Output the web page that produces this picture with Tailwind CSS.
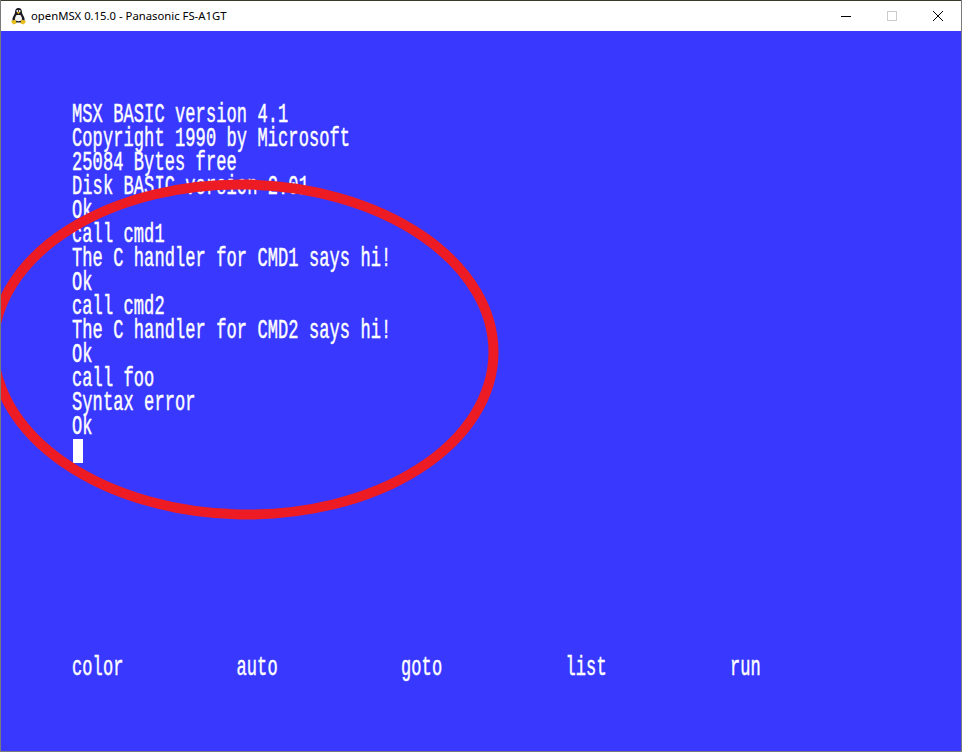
<!DOCTYPE html>
<html lang="en">
<head>
    <meta charset="UTF-8">
    <title>openMSX 0.15.0 - Panasonic FS-A1GT</title>
    <script src="https://cdn.jsdelivr.net/npm/@tailwindcss/browser@4"></script>
</head>
<body class="bg-[#3838ff]">
    <div class="relative w-[962px] h-[752px] overflow-hidden flex flex-col bg-[#3838ff] border-x border-b border-[#7a7a7a]">
        <!-- Title bar -->
        <header class="h-[31px] shrink-0 bg-white border-t border-[#3a3a2a] flex items-center font-['Noto_Sans',sans-serif] text-[11.3px] text-black">
            <svg class="ml-[9px] w-[17px] h-[18px]" viewBox="0 0 17 18">
                <path d="M8.500 1C6 1 5 3 5 5.500C5 7 3 9 2.500 11.500C2 13.500 3 15 4.500 15.500L12.500 15.500C14 15 15 13.500 14.500 11.500C14 9 12 7 12 5.500C12 3 11 1 8.500 1Z" fill="#1a1a22"/>
                <path d="M6.500 8C5.500 9.500 4.800 11 5 13C5.500 14.500 11.500 14.500 12 13C12.200 11 11.500 9.500 10.500 8Z" fill="#f4f4f4"/>
                <circle cx="7.300" cy="4" r="0.900" fill="#fff"/>
                <circle cx="9.700" cy="4" r="0.900" fill="#fff"/>
                <path d="M6.800 5.500L8.500 4.800L10.200 5.500L8.500 7Z" fill="#e8b020"/>
                <path d="M1 14L5.500 12.500L6.500 16.500L3 17.500Z" fill="#e8c020"/>
                <path d="M16 14L11.500 12.500L10.500 16.500L14 17.500Z" fill="#e8c020"/>
            </svg>
            <span class="ml-[4px]">openMSX 0.15.0 - Panasonic FS-A1GT</span>
            <div class="ml-auto flex items-center h-full">
                <div class="w-[46px] flex justify-center"><div class="w-[10px] h-px bg-black"></div></div>
                <div class="w-[46px] flex justify-center"><div class="w-[10px] h-[10px] border border-[#cccccc]"></div></div>
                <div class="w-[46px] flex justify-center">
                    <svg class="w-[10px] h-[10px]" viewBox="0 0 10 10"><path d="M0 0L10 10M10 0L0 10" stroke="#000" stroke-width="1" fill="none"/></svg>
                </div>
            </div>
        </header>

        <!-- MSX screen -->
        <main class="flex-1 flex flex-col pl-[71px] pt-[72px] pb-[71px] font-['Liberation_Mono',monospace] text-[17px] tracking-[0.1px] text-white leading-6 [-webkit-text-stroke:0.3px_white]">
            <div>
                <p class="h-6 whitespace-pre [transform:translateY(1px)_scaleY(1.6)]">MSX BASIC version 4.1</p>
                <p class="h-6 whitespace-pre [transform:translateY(1px)_scaleY(1.6)]">Copyright 1990 by Microsoft</p>
                <p class="h-6 whitespace-pre [transform:translateY(1px)_scaleY(1.6)]">25084 Bytes free</p>
                <p class="h-6 whitespace-pre [transform:translateY(1px)_scaleY(1.6)]">Disk BASIC version 2.01</p>
                <p class="h-6 whitespace-pre [transform:translateY(1px)_scaleY(1.6)]">Ok</p>
                <p class="h-6 whitespace-pre [transform:translateY(1px)_scaleY(1.6)]">call cmd1</p>
                <p class="h-6 whitespace-pre [transform:translateY(1px)_scaleY(1.6)]">The C handler for CMD1 says hi!</p>
                <p class="h-6 whitespace-pre [transform:translateY(1px)_scaleY(1.6)]">Ok</p>
                <p class="h-6 whitespace-pre [transform:translateY(1px)_scaleY(1.6)]">call cmd2</p>
                <p class="h-6 whitespace-pre [transform:translateY(1px)_scaleY(1.6)]">The C handler for CMD2 says hi!</p>
                <p class="h-6 whitespace-pre [transform:translateY(1px)_scaleY(1.6)]">Ok</p>
                <p class="h-6 whitespace-pre [transform:translateY(1px)_scaleY(1.6)]">call foo</p>
                <p class="h-6 whitespace-pre [transform:translateY(1px)_scaleY(1.6)]">Syntax error</p>
                <p class="h-6 whitespace-pre [transform:translateY(1px)_scaleY(1.6)]">Ok</p>
                <div class="ml-px w-[10px] h-6 bg-white"></div>
            </div>
            <!-- Function key row -->
            <div class="mt-auto flex h-6">
                <p class="w-[164.500px] [transform:translateY(1px)_scaleY(1.6)]">color</p>
                <p class="w-[164.500px] [transform:translateY(1px)_scaleY(1.6)]">auto</p>
                <p class="w-[164.500px] [transform:translateY(1px)_scaleY(1.6)]">goto</p>
                <p class="w-[164.500px] [transform:translateY(1px)_scaleY(1.6)]">list</p>
                <p class="w-[164.500px] [transform:translateY(1px)_scaleY(1.6)]">run</p>
            </div>
        </main>

        <!-- Red annotation -->
        <svg class="absolute left-[-1px] top-0 w-[962px] h-[752px] pointer-events-none" viewBox="0 0 962 752" fill="none">
            <ellipse cx="243.500" cy="349.500" rx="250" ry="165" transform="rotate(1 243.500 349.500)" stroke="#ed1c24" stroke-width="10"/>
        </svg>
    </div>
</body>
</html>
